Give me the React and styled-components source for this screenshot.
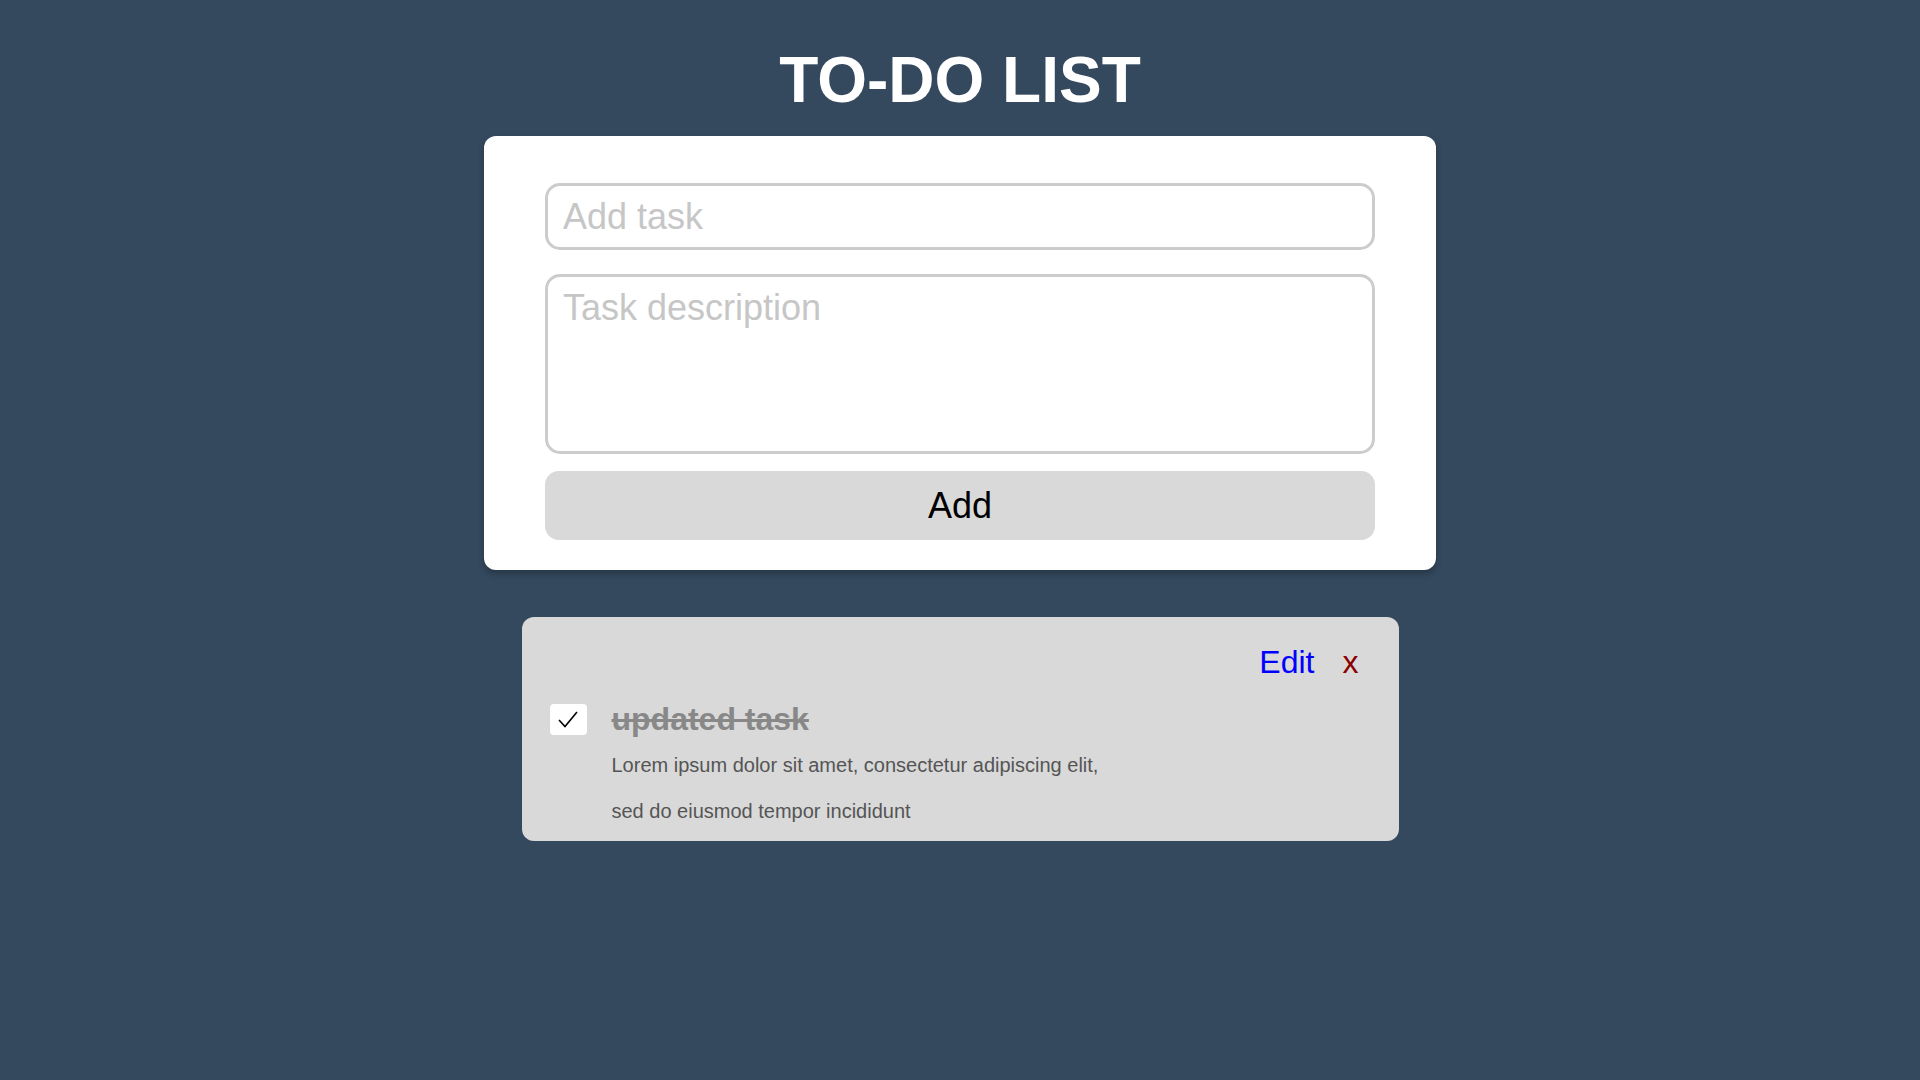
import React from "react";
import styled, { createGlobalStyle } from "styled-components";

const GlobalStyle = createGlobalStyle`
  html, body {
    margin: 0;
    padding: 0;
    background: #34495e;
    font-family: "Liberation Sans", Arial, Helvetica, sans-serif;
  }
  * { box-sizing: border-box; }
`;

const Page = styled.div`
  min-height: 100vh;
  display: flex;
  flex-direction: column;
  align-items: center;
`;

const Title = styled.h1`
  margin: 43px 0 19px;
  font-size: 64px;
  line-height: 74px;
  font-weight: 700;
  color: #ffffff;
`;

const FormCard = styled.form`
  width: 952px;
  background: #ffffff;
  border-radius: 12px;
  box-shadow: 0 4px 6px rgba(0, 0, 0, 0.25);
  padding: 47px 61px 30px;
  display: flex;
  flex-direction: column;
`;

const fieldBase = `
  width: 100%;
  border: 3px solid #cccccc;
  border-radius: 15px;
  font-family: "Liberation Sans", Arial, Helvetica, sans-serif;
  font-size: 36px;
  color: #333333;
  background: #ffffff;
  outline: none;
  &::placeholder { color: #c6c6c6; }
`;

const TextInput = styled.input`
  ${fieldBase}
  height: 67px;
  padding: 0 15px;
`;

const TextArea = styled.textarea`
  ${fieldBase}
  display: block;
  margin-top: 24px;
  height: 180px;
  padding: 10px 15px;
  resize: none;
  line-height: normal;
`;

const AddButton = styled.button`
  margin-top: 17px;
  height: 69px;
  width: 100%;
  border: none;
  border-radius: 14px;
  background: #d9d9d9;
  color: #000000;
  font-family: "Liberation Sans", Arial, Helvetica, sans-serif;
  font-size: 36px;
  cursor: pointer;
`;

const TaskList = styled.div`
  margin-top: 47px;
  display: flex;
  flex-direction: column;
  gap: 20px;
`;

const TaskCard = styled.div`
  width: 877px;
  background: #d9d9d9;
  border-radius: 12px;
  padding: 27px 40px 7px 28px;
`;

const Actions = styled.div`
  display: flex;
  justify-content: flex-end;
  gap: 28px;
`;

const ActionButton = styled.button`
  border: none;
  background: none;
  padding: 0;
  font-family: "Liberation Sans", Arial, Helvetica, sans-serif;
  font-size: 32px;
  line-height: 37px;
  color: ${(p) => p.$color};
  cursor: pointer;
`;

const TaskRow = styled.div`
  margin-top: 20px;
  display: flex;
  align-items: center;
  gap: 25px;
`;

const CheckBox = styled.span`
  flex: none;
  width: 37px;
  height: 31px;
  border-radius: 4px;
  background: #ffffff;
  display: flex;
  align-items: center;
  justify-content: center;
`;

const TaskTitle = styled.span`
  font-size: 32px;
  line-height: 37px;
  font-weight: 700;
  color: #888888;
  text-decoration: ${(p) => (p.$done ? "line-through" : "none")};
`;

const Description = styled.div`
  margin-top: 4px;
  padding-left: 62px;
`;

const DescLine = styled.p`
  margin: 0;
  font-size: 20px;
  line-height: 46px;
  color: #555555;
`;

const tasks = [
  {
    id: 1,
    title: "updated task",
    done: true,
    description: [
      "Lorem ipsum dolor sit amet, consectetur adipiscing elit,",
      "sed do eiusmod tempor incididunt",
    ],
  },
];

export default function App() {
  return (
    <>
      <GlobalStyle />
      <Page>
        <Title>TO-DO LIST</Title>
        <FormCard onSubmit={(e) => e.preventDefault()}>
          <TextInput placeholder="Add task" />
          <TextArea placeholder="Task description" />
          <AddButton type="submit">Add</AddButton>
        </FormCard>
        <TaskList>
          {tasks.map((t) => (
            <TaskCard key={t.id}>
              <Actions>
                <ActionButton $color="#0000ff">Edit</ActionButton>
                <ActionButton $color="#8b0000">x</ActionButton>
              </Actions>
              <TaskRow>
                <CheckBox>
                  {t.done && (
                    <svg width="20" height="17" viewBox="0 0 20 17">
                      <polyline
                        points="1,9 7,15.5 19,1"
                        fill="none"
                        stroke="#000"
                        strokeWidth="1.6"
                      />
                    </svg>
                  )}
                </CheckBox>
                <TaskTitle $done={t.done}>{t.title}</TaskTitle>
              </TaskRow>
              <Description>
                {t.description.map((line, i) => (
                  <DescLine key={i}>{line}</DescLine>
                ))}
              </Description>
            </TaskCard>
          ))}
        </TaskList>
      </Page>
    </>
  );
}
